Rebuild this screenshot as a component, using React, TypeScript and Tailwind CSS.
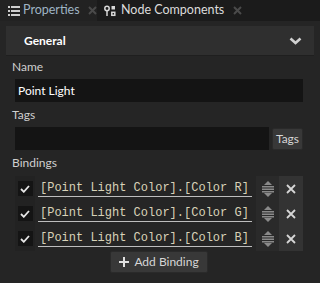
import React from 'react';

const rows = ['R', 'G', 'B'];

const ListIcon = () => (
    <svg width="12" height="10" viewBox="0 0 12 10" fill="#cfcfcf">
        <rect x="0" y="0" width="2" height="2" />
        <rect x="3" y="0" width="9" height="2" />
        <rect x="0" y="4" width="2" height="2" />
        <rect x="3" y="4" width="9" height="2" />
        <rect x="0" y="8" width="2" height="2" />
        <rect x="3" y="8" width="9" height="2" />
    </svg>
);

const NodeIcon = () => (
    <svg width="12" height="12" viewBox="0 0 12 12" fill="none" stroke="#d8d8d8" strokeWidth="1.5">
        <circle cx="3" cy="3.5" r="2.2" />
        <path d="M3 6v5" />
        <rect x="7.5" y="1" width="3.5" height="3.5" fill="#d8d8d8" stroke="none" />
        <rect x="7.8" y="7.3" width="3" height="3" />
    </svg>
);

const CloseSmall = () => (
    <svg width="9" height="9" viewBox="0 0 9 9" stroke="#4a4a4a" strokeWidth="2">
        <path d="M1 1l7 7M8 1L1 8" />
    </svg>
);

const Check = () => (
    <svg width="10" height="8" viewBox="0 0 10 8" fill="none" stroke="#e6e6e6" strokeWidth="1.8">
        <path d="M1 4l2.8 2.8L9 1" />
    </svg>
);

const MoveIcon = () => (
    <svg width="12" height="16" viewBox="0 0 12 16" fill="#8a8a8a">
        <path d="M6 0l4 4H2z" />
        <rect x="0" y="5" width="12" height="1.5" />
        <rect x="0" y="7.5" width="12" height="1.5" />
        <rect x="0" y="10" width="12" height="1.5" />
        <path d="M6 16l4-4H2z" />
    </svg>
);

export default function App() {
    return (
        <div
            className="w-[320px] h-[283px] bg-[#252525] text-[#d6d6d6] overflow-hidden"
            style={{ fontFamily: 'Lato, "Open Sans", sans-serif' }}
        >
            {/* Tabs */}
            <div className="flex h-[21px] bg-[#1b1b1b] text-[12.5px] leading-none">
                <div className="flex items-center w-[97px] bg-[#222222] pl-[8px]">
                    <ListIcon />
                    <span className="ml-[3px] text-[#9fb4c4]">Properties</span>
                    <span className="ml-[8px]"><CloseSmall /></span>
                </div>
                <div className="flex items-center pl-[7px]">
                    <NodeIcon />
                    <span className="ml-[5px] text-[#dcdcdc]">Node Components</span>
                    <span className="ml-[9px]"><CloseSmall /></span>
                </div>
            </div>

            {/* Panel */}
            <div className="px-[6px] pt-[5px]">
                <div className="flex items-center justify-between h-[30px] bg-[#2f2f2f] border-b border-[#1f1f1f] pl-[18px] pr-[12px]">
                    <span className="text-[12px] font-bold text-white">General</span>
                    <svg width="13" height="8" viewBox="0 0 13 8" fill="none" stroke="#d0d0d0" strokeWidth="2.6">
                        <path d="M1.5 1.5l5 4.5 5-4.5" />
                    </svg>
                </div>

                <div className="pl-[6px] pr-[11px] text-[12px]">
                    <div className="h-[23px] pt-[3px] leading-[16px] text-[#cfcfcf]">Name</div>
                    <div className="ml-[3px] h-[23px] bg-[#141414] flex items-center pl-[3px] text-white">
                        Point Light
                    </div>

                    <div className="h-[25px] pt-[5px] leading-[16px] text-[#cfcfcf]">Tags</div>
                    <div className="ml-[3px] flex h-[23px] gap-[3px]">
                        <div className="flex-1 bg-[#141414]" />
                        <button className="w-[31px] mt-[1px] bg-[#383838] rounded-[2px] border border-[#2a2a2a] text-[#d6d6d6]">
                            Tags
                        </button>
                    </div>

                    <div className="h-[26px] pt-[5px] leading-[16px] text-[#cfcfcf]">Bindings</div>
                    <div className="ml-[3px] flex flex-col">
                        {rows.map((c) => (
                            <div key={c} className="flex h-[25px]">
                                <div className="w-[20px] shrink-0 bg-[#222222] flex items-center justify-center">
                                    <div className="w-[15px] h-[15px] bg-[#141414] flex items-center justify-center">
                                        <Check />
                                    </div>
                                </div>
                                <div className="flex-1 min-w-0 flex items-center pl-[3px] pr-[4px]">
                                    <div
                                        className="flex-1 border-b border-[#bdbdbd] text-[12px] leading-[16px] text-[#d8d2b8] pl-[2px] whitespace-nowrap overflow-hidden"
                                        style={{ fontFamily: '"Liberation Mono", monospace' }}
                                    >
                                        [Point Light Color].[Color {c}]
                                    </div>
                                </div>
                                <div className="w-[23px] shrink-0 bg-[#2a2a2a] flex items-center justify-center">
                                    <MoveIcon />
                                </div>
                                <div className="w-[24px] shrink-0 bg-[#333333] flex items-center justify-center">
                                    <svg width="10" height="10" viewBox="0 0 10 10" stroke="#d6d6d6" strokeWidth="1.8">
                                        <path d="M1 1l8 8M9 1L1 9" />
                                    </svg>
                                </div>
                            </div>
                        ))}
                        <div className="flex justify-center">
                            <button className="flex items-center h-[22px] px-[8px] bg-[#383838] rounded-[2px] border border-[#2a2a2a] text-[#d6d6d6]">
                                <svg width="10" height="10" viewBox="0 0 10 10" stroke="#e0e0e0" strokeWidth="2">
                                    <path d="M5 0v10M0 5h10" />
                                </svg>
                                <span className="ml-[5px]">Add Binding</span>
                            </button>
                        </div>
                    </div>
                </div>
            </div>
        </div>
    );
}
